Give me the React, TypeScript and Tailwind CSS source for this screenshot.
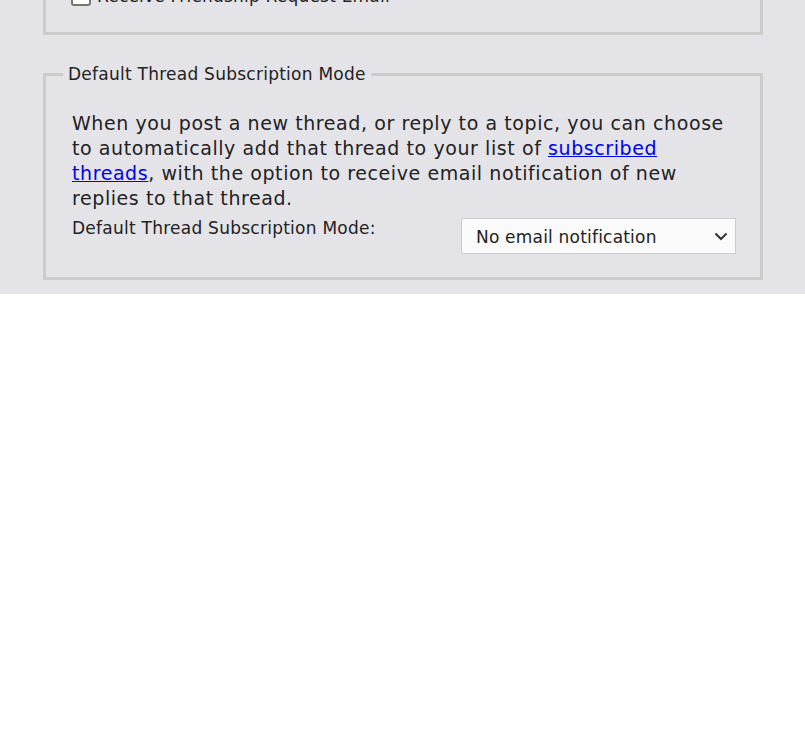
import React from "react";

export default function App() {
  return (
    <div className="min-h-[736px] bg-white" style={{ fontFamily: '"DejaVu Sans", Verdana, sans-serif' }}>
      <div className="bg-[#e4e3e8] pl-[43px] pr-[42px] pb-[14px] text-[#222]">
        <fieldset className="-mt-[23px] border-[3px] border-[#cccccc] pl-[25px] pr-[24px] pt-[6px] pb-[26px]">
          <label className="flex items-center gap-[6px] text-[17px] leading-[20px] tracking-[0.2px]">
            <span className="inline-block h-[20px] w-[20px] rounded-[3px] border-2 border-[#767676] bg-white" />
            <span>Receive Friendship Request Email</span>
          </label>
        </fieldset>

        <fieldset className="mt-[27px] border-[3px] border-[#cccccc] pl-[26px] pr-[24px] pt-[23px] pb-[23px]">
          <legend className="-ml-[9px] px-[5px] text-[17px] tracking-[0.25px]">Default Thread Subscription Mode</legend>
          <p className="text-[19px] leading-[25px] tracking-[0.58px]">
            When you post a new thread, or reply to a topic, you can choose to automatically add that thread to your list of{" "}
            <a href="#" className="text-[#0000ee] underline">subscribed threads</a>, with the option to receive email notification of new replies to that thread.
          </p>
          <div className="mt-[7px] flex items-start justify-between">
            <span className="-mt-[2px] text-[17px] tracking-[0.25px]">Default Thread Subscription Mode:</span>
            <div className="relative h-[36px] w-[275px] border border-[#cccccc] bg-[#fafafa]">
              <span className="absolute left-[14px] top-[6px] text-[17px] tracking-[0.2px] text-[#222]">No email notification</span>
              <svg className="absolute right-[7px] top-[13px]" width="14" height="9" viewBox="0 0 14 9" fill="none">
                <path d="M1.5 1.5 L7 7 L12.5 1.5" stroke="#333" strokeWidth="2" />
              </svg>
            </div>
          </div>
        </fieldset>
      </div>
    </div>
  );
}
